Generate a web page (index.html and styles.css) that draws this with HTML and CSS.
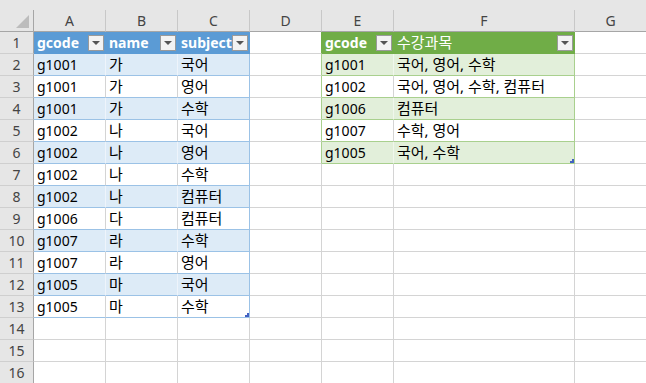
FILE: index.html
```html
<!DOCTYPE html>
<html lang="ko">
<head>
    <meta charset="UTF-8">
    <title>Sheet1</title>
    <link rel="stylesheet" href="styles.css">
</head>
<body>
    <div class="sheet">
        <div class="strip"></div>

        <div class="row colhead">
            <div class="c corner"><span class="corner-tri"></span></div>
            <div class="c">A</div>
            <div class="c">B</div>
            <div class="c">C</div>
            <div class="c">D</div>
            <div class="c">E</div>
            <div class="c">F</div>
            <div class="c">G</div>
        </div>

        <div class="row">
            <div class="c rh">1</div>
            <div class="c hd blue">gcode<span class="filter"></span></div>
            <div class="c hd blue">name<span class="filter"></span></div>
            <div class="c hd blue">subject<span class="filter"></span></div>
            <div class="c to-green-hd"></div>
            <div class="c hd green">gcode<span class="filter"></span></div>
            <div class="c hd green ko">수강과목<span class="filter"></span></div>
            <div class="c"></div>
        </div>

        <div class="row">
            <div class="c rh">2</div>
            <div class="c blue band">g1001</div>
            <div class="c blue band ko">가</div>
            <div class="c blue band edge ko">국어</div>
            <div class="c to-green"></div>
            <div class="c green band">g1001</div>
            <div class="c green band edge ko">국어, 영어, 수학</div>
            <div class="c"></div>
        </div>

        <div class="row">
            <div class="c rh">3</div>
            <div class="c blue">g1001</div>
            <div class="c blue ko">가</div>
            <div class="c blue edge ko">영어</div>
            <div class="c to-green"></div>
            <div class="c green">g1002</div>
            <div class="c green edge ko">국어, 영어, 수학, 컴퓨터</div>
            <div class="c"></div>
        </div>

        <div class="row">
            <div class="c rh">4</div>
            <div class="c blue band">g1001</div>
            <div class="c blue band ko">가</div>
            <div class="c blue band edge ko">수학</div>
            <div class="c to-green"></div>
            <div class="c green band">g1006</div>
            <div class="c green band edge ko">컴퓨터</div>
            <div class="c"></div>
        </div>

        <div class="row">
            <div class="c rh">5</div>
            <div class="c blue">g1002</div>
            <div class="c blue ko">나</div>
            <div class="c blue edge ko">국어</div>
            <div class="c to-green"></div>
            <div class="c green">g1007</div>
            <div class="c green edge ko">수학, 영어</div>
            <div class="c"></div>
        </div>

        <div class="row">
            <div class="c rh">6</div>
            <div class="c blue band">g1002</div>
            <div class="c blue band ko">나</div>
            <div class="c blue band edge ko">영어</div>
            <div class="c to-green"></div>
            <div class="c green band">g1005</div>
            <div class="c green band edge ko">국어, 수학<span class="resize"></span></div>
            <div class="c"></div>
        </div>

        <div class="row">
            <div class="c rh">7</div>
            <div class="c blue">g1002</div>
            <div class="c blue ko">나</div>
            <div class="c blue edge ko">수학</div>
            <div class="c"></div>
            <div class="c"></div>
            <div class="c"></div>
            <div class="c"></div>
        </div>

        <div class="row">
            <div class="c rh">8</div>
            <div class="c blue band">g1002</div>
            <div class="c blue band ko">나</div>
            <div class="c blue band edge ko">컴퓨터</div>
            <div class="c"></div>
            <div class="c"></div>
            <div class="c"></div>
            <div class="c"></div>
        </div>

        <div class="row">
            <div class="c rh">9</div>
            <div class="c blue">g1006</div>
            <div class="c blue ko">다</div>
            <div class="c blue edge ko">컴퓨터</div>
            <div class="c"></div>
            <div class="c"></div>
            <div class="c"></div>
            <div class="c"></div>
        </div>

        <div class="row">
            <div class="c rh">10</div>
            <div class="c blue band">g1007</div>
            <div class="c blue band ko">라</div>
            <div class="c blue band edge ko">수학</div>
            <div class="c"></div>
            <div class="c"></div>
            <div class="c"></div>
            <div class="c"></div>
        </div>

        <div class="row">
            <div class="c rh">11</div>
            <div class="c blue">g1007</div>
            <div class="c blue ko">라</div>
            <div class="c blue edge ko">영어</div>
            <div class="c"></div>
            <div class="c"></div>
            <div class="c"></div>
            <div class="c"></div>
        </div>

        <div class="row">
            <div class="c rh">12</div>
            <div class="c blue band">g1005</div>
            <div class="c blue band ko">마</div>
            <div class="c blue band edge ko">국어</div>
            <div class="c"></div>
            <div class="c"></div>
            <div class="c"></div>
            <div class="c"></div>
        </div>

        <div class="row">
            <div class="c rh">13</div>
            <div class="c blue">g1005</div>
            <div class="c blue ko">마</div>
            <div class="c blue edge ko">수학<span class="resize"></span></div>
            <div class="c"></div>
            <div class="c"></div>
            <div class="c"></div>
            <div class="c"></div>
        </div>

        <div class="row">
            <div class="c rh">14</div>
            <div class="c"></div><div class="c"></div><div class="c"></div><div class="c"></div>
            <div class="c"></div><div class="c"></div><div class="c"></div>
        </div>

        <div class="row">
            <div class="c rh">15</div>
            <div class="c"></div><div class="c"></div><div class="c"></div><div class="c"></div>
            <div class="c"></div><div class="c"></div><div class="c"></div>
        </div>

        <div class="row">
            <div class="c rh">16</div>
            <div class="c"></div><div class="c"></div><div class="c"></div><div class="c"></div>
            <div class="c"></div><div class="c"></div><div class="c"></div>
        </div>
    </div>
</body>
</html>
```

FILE: styles.css
```css
html, body {
    margin: 0;
    background: #fff;
    overflow: hidden;
}
.sheet {
    width: 646px;
    font-family: "Noto Sans", "Noto Sans CJK KR", sans-serif;
    font-size: 14px;
    color: #000;
}
.strip {
    height: 10px;
    background: #e6e6e6;
}
.row {
    display: grid;
    grid-template-columns: 34px 72px 72px 72px 72px 72px 181px 72px;
    height: 22px;
}
.c {
    position: relative;
    box-sizing: border-box;
    height: 22px;
    padding: 0 3px;
    line-height: 21px;
    white-space: nowrap;
    overflow: hidden;
    border-right: 1px solid #d4d4d4;
    border-bottom: 1px solid #d4d4d4;
}
/* hangul runs a little larger, like the sheet's default font */
.ko {
    font-size: 15px;
}

/* column letters and row numbers */
.colhead .c {
    height: 22px;
    background: #e6e6e6;
    color: #444;
    text-align: center;
    border-right-color: #c8c8c8;
    border-bottom-color: #a6a6a6;
}
.colhead .corner {
    border-right-color: #a6a6a6;
}
.corner-tri {
    position: absolute;
    right: 4px;
    bottom: 3px;
    width: 0;
    height: 0;
    border-left: 13px solid transparent;
    border-bottom: 13px solid #bcbcbc;
}
.rh {
    background: #e6e6e6;
    color: #444;
    text-align: center;
    padding: 0;
    border-right-color: #a6a6a6;
    border-bottom-color: #cfcfcf;
}

/* table headers */
.hd {
    display: flex;
    align-items: center;
    justify-content: space-between;
    padding-right: 1px;
    color: #fff;
    font-weight: bold;
}
.hd.ko {
    font-weight: normal;
}
.hd.blue {
    background: #5b9bd5;
    border-color: #5b9bd5;
}
.hd.green {
    background: #70ad47;
    border-color: #70ad47;
}
.filter {
    flex: none;
    display: flex;
    align-items: center;
    justify-content: center;
    box-sizing: border-box;
    width: 16px;
    height: 16px;
    margin-top: 1px;
    background: #f3f3f3;
    border: 1px solid #9a9a9a;
}
.filter::after {
    content: "";
    width: 0;
    height: 0;
    border-left: 4px solid transparent;
    border-right: 4px solid transparent;
    border-top: 4px solid #555;
}

/* table body rows */
.blue {
    border-bottom-color: #9bc2e6;
}
.blue.band {
    background: #ddebf7;
    border-right-color: #eef4fb;
}
.blue.edge {
    border-right-color: #9bc2e6;
}
.green {
    border-bottom-color: #a9d08e;
}
.green.band {
    background: #e2efda;
    border-right-color: #f0f7ec;
}
.green.edge {
    border-right-color: #a9d08e;
}
.to-green {
    border-right-color: #a9d08e;
}
.to-green-hd {
    border-right-color: #70ad47;
}

/* table resize grip in the last cell */
.resize {
    position: absolute;
    right: 0;
    bottom: 0;
    width: 4px;
    height: 4px;
    background: #4361c2;
    clip-path: polygon(50% 0, 100% 0, 100% 100%, 0 100%, 0 50%, 50% 50%);
}
```
